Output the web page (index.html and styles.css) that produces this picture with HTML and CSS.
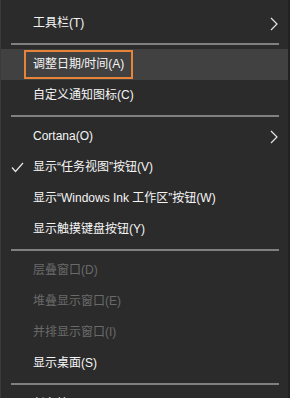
FILE: index.html
```html
<!DOCTYPE html>
<html lang="zh-CN">
<head>
    <meta charset="UTF-8">
    <meta name="viewport" content="width=device-width, initial-scale=1.0">
    <title>任务栏菜单</title>
    <link rel="stylesheet" href="styles.css">
</head>
<body>
    <div class="menu">
        <div class="item">
            <span class="label">工具栏(T)</span>
            <svg class="arrow" width="8" height="14" viewBox="0 0 8 14"><path d="M1 1 L7 7 L1 13" fill="none" stroke="#e6e6e6" stroke-width="1.2"/></svg>
        </div>
        <div class="sep"></div>
        <div class="item active">
            <span class="label boxed">调整日期/时间(A)</span>
        </div>
        <div class="item">
            <span class="label">自定义通知图标(C)</span>
        </div>
        <div class="sep"></div>
        <div class="item">
            <span class="label">Cortana(O)</span>
            <svg class="arrow" width="8" height="14" viewBox="0 0 8 14"><path d="M1 1 L7 7 L1 13" fill="none" stroke="#e6e6e6" stroke-width="1.2"/></svg>
        </div>
        <div class="item">
            <svg class="check" width="13" height="11" viewBox="0 0 13 11"><path d="M1 5.5 L4.5 9.5 L12 1" fill="none" stroke="#e6e6e6" stroke-width="1.2"/></svg>
            <span class="label">显示“任务视图”按钮(V)</span>
        </div>
        <div class="item">
            <span class="label">显示“Windows Ink 工作区”按钮(W)</span>
        </div>
        <div class="item">
            <span class="label">显示触摸键盘按钮(Y)</span>
        </div>
        <div class="sep"></div>
        <div class="item disabled">
            <span class="label">层叠窗口(D)</span>
        </div>
        <div class="item disabled">
            <span class="label">堆叠显示窗口(E)</span>
        </div>
        <div class="item disabled">
            <span class="label">并排显示窗口(I)</span>
        </div>
        <div class="item">
            <span class="label">显示桌面(S)</span>
        </div>
        <div class="sep"></div>
        <div class="item">
            <span class="label">任务管理器(K)</span>
        </div>
    </div>
</body>
</html>
```

FILE: styles.css
```css
body {
    margin: 0;
    background-color: #2b2b2b;
    font-family: "Liberation Sans", "Noto Sans CJK SC", sans-serif;
    color: #f5f5f5;
    overflow: hidden;
}

.menu {
    width: 290px;
    height: 398px;
    box-sizing: border-box;
    padding-top: 8px;
    border-left: 1px solid #3a3a3a;
    border-right: 2px solid #222;
    background-color: #2b2b2b;
    overflow: hidden;
}

.item {
    position: relative;
    height: 31px;
    display: flex;
    align-items: center;
    padding-left: 32px;
    font-size: 12px;
}

.item.active {
    background-color: #414141;
}

.item.disabled {
    color: #6a6a6a;
}

.label {
    white-space: nowrap;
    line-height: 25px;
}

.boxed {
    border: 2px solid #e8843a;
    padding: 0 7px 0 7px;
    margin-left: -9px;
}

.arrow {
    position: absolute;
    right: 10px;
    top: 9px;
}

.check {
    position: absolute;
    left: 10px;
    top: 10px;
}

.sep {
    height: 2px;
    margin: 4px 9px 4px 10px;
    background-color: #808080;
}
```
